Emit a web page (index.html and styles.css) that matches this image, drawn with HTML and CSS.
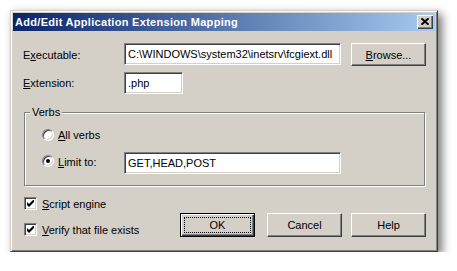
FILE: index.html
```html
<!DOCTYPE html>
<html>
<head>
<meta charset="utf-8">
<title>Add/Edit Application Extension Mapping</title>
<link rel="stylesheet" href="styles.css">
</head>
<body>
<div class="window">
  <div class="titlebar">
    <span class="title">Add/Edit Application Extension Mapping</span>
    <span class="close"><svg width="8" height="7" viewBox="0 0 8 7"><path d="M0.5 0.3 L7.5 6.7 M7.5 0.3 L0.5 6.7" stroke="#000" stroke-width="1.9" fill="none"/></svg></span>
  </div>
  <div class="content">
    <div class="row r1">
      <span class="lbl">E<u>x</u>ecutable:</span>
      <div class="field exe">C:\WINDOWS\system32\inetsrv\fcgiext.dll</div>
      <div class="btn browse"><span><u>B</u>rowse...</span></div>
    </div>
    <div class="row r2">
      <span class="lbl"><u>E</u>xtension:</span>
      <div class="field ext">.php</div>
    </div>
    <div class="group">
      <div class="legend">Verbs</div>
      <div class="row opt1">
        <span class="radio"></span>
        <span><u>A</u>ll verbs</span>
      </div>
      <div class="row opt2">
        <span class="radio on"></span>
        <span class="optlbl"><u>L</u>imit to:</span>
        <div class="field verbs">GET,HEAD,POST</div>
      </div>
    </div>
    <div class="bottom">
      <div class="checks">
        <div class="chk"><span class="box"><svg width="7" height="7" viewBox="0 0 7 7"><polygon points="0,2 2,4 7,-1 7,2 2,7 0,5" fill="#000"/></svg></span><span><u>S</u>cript engine</span></div>
        <div class="chk"><span class="box"><svg width="7" height="7" viewBox="0 0 7 7"><polygon points="0,2 2,4 7,-1 7,2 2,7 0,5" fill="#000"/></svg></span><span><u>V</u>erify that file exists</span></div>
      </div>
      <div class="btn big ok"><div class="focus">OK</div></div>
      <div class="btn big cancel">Cancel</div>
      <div class="btn big help">Help</div>
    </div>
  </div>
</div>
</body>
</html>
```
FILE: styles.css
```css
* { box-sizing: border-box; }
body {
  margin: 0;
  background: #fff;
  font-family: "Liberation Sans", Arial, sans-serif;
  font-size: 11px;
  color: #000;
}
.window {
  margin: 10px 0 0 10px;
  width: 428px;
  height: 242px;
  background: #d4d0c8;
  border: 1px solid;
  border-color: #d4d0c8 #404040 #404040 #d4d0c8;
  padding: 2px;
  box-shadow: inset 1px 1px #fff, inset -1px -1px #808080, 4px 4px 9px rgba(0,0,0,0.55);
}
.titlebar {
  height: 18px;
  background: linear-gradient(to right, #0a246a, #a6caf0);
  display: flex;
  align-items: center;
  color: #fff;
  font-weight: bold;
  padding-left: 2px;
}
.title { letter-spacing: 0.3px; }
.close {
  margin-left: auto;
  margin-right: 2px;
  width: 16px;
  height: 14px;
  background: #d4d0c8;
  box-shadow: inset 1px 1px #fff, inset -1px -1px #404040, inset -2px -2px #808080;
  display: flex;
  align-items: center;
  justify-content: center;
  padding-bottom: 1px;
}
.close svg { display: block; }
.content { padding: 12px 0 0 10px; }
.row { display: flex; align-items: center; }
.r1 { align-items: flex-start; }
.r1 .lbl, .r2 .lbl { align-self: center; }
.lbl { width: 101px; }
.field {
  height: 22px;
  background: #fff;
  border: 1px solid;
  border-color: #808080 #fff #fff #808080;
  box-shadow: inset 1px 1px #404040, inset -1px -1px #d4d0c8;
  padding: 0 3px;
  display: flex;
  align-items: center;
  white-space: nowrap;
  overflow: hidden;
}
.exe { width: 217px; }
.ext { width: 59px; }
.r2 { margin-top: 6px; }
.btn {
  width: 75px;
  height: 23px;
  background: #d4d0c8;
  border: 1px solid;
  border-color: #fff #404040 #404040 #fff;
  box-shadow: inset -1px -1px #808080;
  display: flex;
  align-items: center;
  justify-content: center;
}
.browse { margin-left: 10px; }
.group {
  margin: 18px 0 0 1px;
  width: 401px;
  height: 74px;
  border: 1px solid #808080;
  box-shadow: inset 1px 1px #fff, 1px 1px #fff;
  padding-left: 17px;
}
.legend {
  width: max-content;
  margin: -7px 0 0 -12px;
  padding: 0 2px;
  background: #d4d0c8;
  line-height: 13px;
}
.opt1 { margin-top: 8px; height: 16px; }
.opt2 { margin-top: 9px; }
.radio {
  position: relative;
  width: 12px;
  height: 12px;
  border-radius: 50%;
  border: 1px solid;
  border-color: #808080 #fff #fff #808080;
  box-shadow: inset 1px 1px #404040, inset -1px -1px #d4d0c8;
  background: #fff;
  margin-right: 4px;
  display: flex;
  align-items: center;
  justify-content: center;
}
.opt2 .radio { margin-bottom: 4px; }
.radio.on::after {
  content: "";
  width: 4px;
  height: 4px;
  border-radius: 50%;
  background: #000;
}
.optlbl { width: 66px; margin-bottom: 2px; }
.verbs { width: 217px; }
.bottom { display: flex; align-items: flex-start; margin-left: 1px; }
.checks { width: 156px; padding-top: 11px; }
.chk { display: flex; align-items: center; height: 13px; }
.chk + .chk { margin-top: 13px; }
.box {
  width: 13px;
  height: 13px;
  background: #fff;
  border: 1px solid;
  border-color: #808080 #fff #fff #808080;
  box-shadow: inset 1px 1px #404040, inset -1px -1px #d4d0c8;
  margin-right: 5px;
  display: flex;
  align-items: center;
  justify-content: center;
}
.box svg { display: block; }
.big { margin-top: 27px; height: 24px; }
.ok {
  border: 1px solid #000;
  box-shadow: inset 1px 1px #fff, inset -1px -1px #404040, inset -2px -2px #808080;
  padding: 3px;
}
.focus {
  flex: 1;
  align-self: stretch;
  border: 1px dotted #000;
  display: flex;
  align-items: center;
  justify-content: center;
}
.cancel { margin-left: 12px; }
.help { margin-left: 9px; }
```
